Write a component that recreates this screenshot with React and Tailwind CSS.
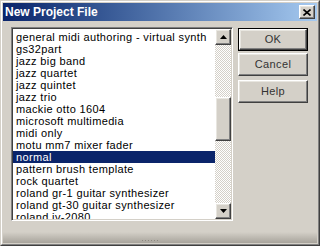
import React from "react";

const items = [
  "general midi authoring - virtual synth",
  "gs32part",
  "jazz big band",
  "jazz quartet",
  "jazz quintet",
  "jazz trio",
  "mackie otto 1604",
  "microsoft multimedia",
  "midi only",
  "motu mm7 mixer fader",
  "normal",
  "pattern brush template",
  "rock quartet",
  "roland gr-1 guitar synthesizer",
  "roland gt-30 guitar synthesizer",
  "roland jv-2080",
];

const raised =
  "border border-t-white border-l-white border-r-[#404040] border-b-[#404040] shadow-[inset_-1px_-1px_#808080,inset_1px_1px_#e8e6e0] bg-[#d4d0c8]";

function Arrow({ up }) {
  return (
    <svg width="7" height="4" viewBox="0 0 7 4">
      {up ? (
        <polygon points="3.5,0 7,4 0,4" fill="#000" />
      ) : (
        <polygon points="0,0 7,0 3.5,4" fill="#000" />
      )}
    </svg>
  );
}

function Btn({ label, def }) {
  const inner = (
    <div className={`${raised} w-full h-full flex items-center justify-center text-[11px] tracking-[0.4px] text-[#333]`}>
      {label}
    </div>
  );
  return def ? (
    <div className="w-[70px] h-[23px] border border-black">{inner}</div>
  ) : (
    <div className="w-[70px] h-[23px]">{inner}</div>
  );
}

export default function App() {
  return (
    <div
      className="w-[320px] h-[246px] bg-[#d4d0c8] border border-t-[#d4d0c8] border-l-[#d4d0c8] border-r-[#404040] border-b-[#404040] overflow-hidden"
      style={{ fontFamily: '"Liberation Sans", Arial, sans-serif' }}
    >
      <div className="w-full h-full border border-t-white border-l-white border-r-[#808080] border-b-[#808080] p-[1px] flex flex-col">
        {/* title bar */}
        <div className="h-[18px] shrink-0 bg-gradient-to-r from-[#0a246a] to-[#a6caf0] flex items-center justify-between pl-[2px] pr-[2px]">
          <span className="text-white font-bold text-[12px] leading-none">New Project File</span>
          <div className={`${raised} w-[16px] h-[14px] flex items-center justify-center`}>
            <svg width="8" height="7" viewBox="0 0 8 7">
              <path d="M0.5 0.5 L7.5 6.5 M7.5 0.5 L0.5 6.5" stroke="#000" strokeWidth="1.6" />
            </svg>
          </div>
        </div>

        {/* body */}
        <div className="flex-1 flex pt-[6px] pl-[8px]">
          {/* listbox */}
          <div className="w-[222px] h-[194px] bg-white border border-t-[#808080] border-l-[#808080] border-r-white border-b-white shadow-[inset_1px_1px_#404040,inset_-1px_-1px_#d4d0c8] p-[1px] flex">
            <div className="flex-1 overflow-hidden pt-[2px]">
              {items.map((t) => (
                <div
                  key={t}
                  className={`h-[12px] leading-[12px] text-[11px] tracking-[0.35px] pl-[3px] whitespace-nowrap ${
                    t === "normal" ? "bg-[#0a246a] text-white" : "text-black"
                  }`}
                >
                  {t}
                </div>
              ))}
            </div>
            {/* scrollbar */}
            <div className="w-[16px] flex flex-col bg-[repeating-conic-gradient(#ffffff_0_25%,#d4d0c8_0_50%)] bg-[length:2px_2px]">
              <div className={`${raised} h-[16px] flex items-center justify-center`}>
                <Arrow up />
              </div>
              <div className="h-[52px]" />
              <div className={`${raised} h-[44px]`} />
              <div className="flex-1" />
              <div className={`${raised} h-[16px] flex items-center justify-center`}>
                <Arrow />
              </div>
            </div>
          </div>

          {/* buttons */}
          <div className="ml-[5px] pt-[1px] flex flex-col">
            <Btn label="OK" def />
            <div className="h-[2px]" />
            <Btn label="Cancel" />
            <div className="h-[4px]" />
            <Btn label="Help" />
          </div>
        </div>

        {/* bottom band */}
        <div className="h-[11px] shrink-0 bg-gradient-to-b from-[#d4d0c8] to-[#a8a49c] flex justify-center items-end pb-[2px]">
          <div className="w-[16px] h-[1px] bg-[repeating-linear-gradient(90deg,#8c8880_0_1px,transparent_1px_3px)] ml-[-20px]" />
        </div>
      </div>
    </div>
  );
}
